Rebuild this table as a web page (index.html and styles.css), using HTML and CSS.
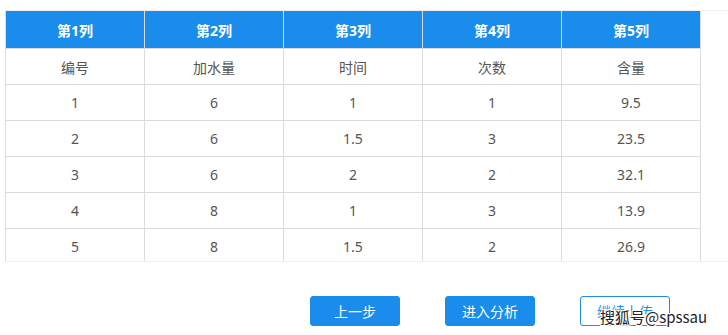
FILE: index.html
```html
<!DOCTYPE html>
<html lang="zh">
<head>
<meta charset="utf-8">
<link rel="stylesheet" href="styles.css">
</head>
<body>
<div class="page">
  <div class="scroll">
    <table class="grid">
      <thead>
        <tr><th>第1列</th><th>第2列</th><th>第3列</th><th>第4列</th><th>第5列</th></tr>
      </thead>
      <tbody>
        <tr><td>编号</td><td>加水量</td><td>时间</td><td>次数</td><td>含量</td></tr>
        <tr><td>1</td><td>6</td><td>1</td><td>1</td><td>9.5</td></tr>
        <tr><td>2</td><td>6</td><td>1.5</td><td>3</td><td>23.5</td></tr>
        <tr><td>3</td><td>6</td><td>2</td><td>2</td><td>32.1</td></tr>
        <tr><td>4</td><td>8</td><td>1</td><td>3</td><td>13.9</td></tr>
        <tr><td>5</td><td>8</td><td>1.5</td><td>2</td><td>26.9</td></tr>
      </tbody>
    </table>
  </div>
  <div class="actions">
    <button class="btn btn-primary">上一步</button>
    <button class="btn btn-primary">进入分析</button>
    <button class="btn btn-outline">继续上传</button>
  </div>
  <div class="watermark">搜狐号@spssau</div>
</div>
</body>
</html>
```
FILE: styles.css
```css
html, body {
  margin: 0;
  padding: 0;
  background: #fff;
}
body {
  width: 728px;
  height: 335px;
  overflow: hidden;
  font-family: "Noto Sans", "Noto Sans CJK SC", sans-serif;
}
.page {
  position: relative;
  padding-top: 10px;
  padding-left: 5px;
}
.scroll {
  height: 250px;
  overflow: hidden;
  border-top: 1px solid #eeeeee;
  border-bottom: 1px solid #eeeeee;
}
.grid {
  border-collapse: collapse;
  table-layout: fixed;
  width: 696px;
}
.grid th, .grid td {
  border: 1px solid #dcdcdc;
  text-align: center;
  padding: 0;
  font-size: 14px;
}
.grid th {
  background: #1a8ceb;
  color: #fff;
  font-weight: bold;
  height: 37px;
  border-top: none;
}
.grid td {
  color: #555;
  height: 35px;
}
.actions {
  display: flex;
  gap: 45px;
  padding-left: 305px;
  margin-top: 34px;
}
.btn {
  width: 90px;
  height: 30px;
  border-radius: 3px;
  font-family: "Noto Sans CJK SC", sans-serif;
  font-size: 14px;
  padding: 0;
  cursor: pointer;
}
.btn-primary {
  background: #1a8ceb;
  border: 1px solid #1a8ceb;
  color: #fff;
}
.btn-outline {
  background: #fff;
  border: 1px solid #1a8ceb;
  color: #1a8ceb;
}
.watermark {
  position: absolute;
  left: 600px;
  top: 306px;
  font-family: "Noto Sans CJK SC", sans-serif;
  font-size: 15px;
  color: #222;
  text-shadow: 1px 0 #fff, -1px 0 #fff, 0 1px #fff, 0 -1px #fff, 1px 1px #fff, -1px -1px #fff, 1px -1px #fff, -1px 1px #fff;
}
```
